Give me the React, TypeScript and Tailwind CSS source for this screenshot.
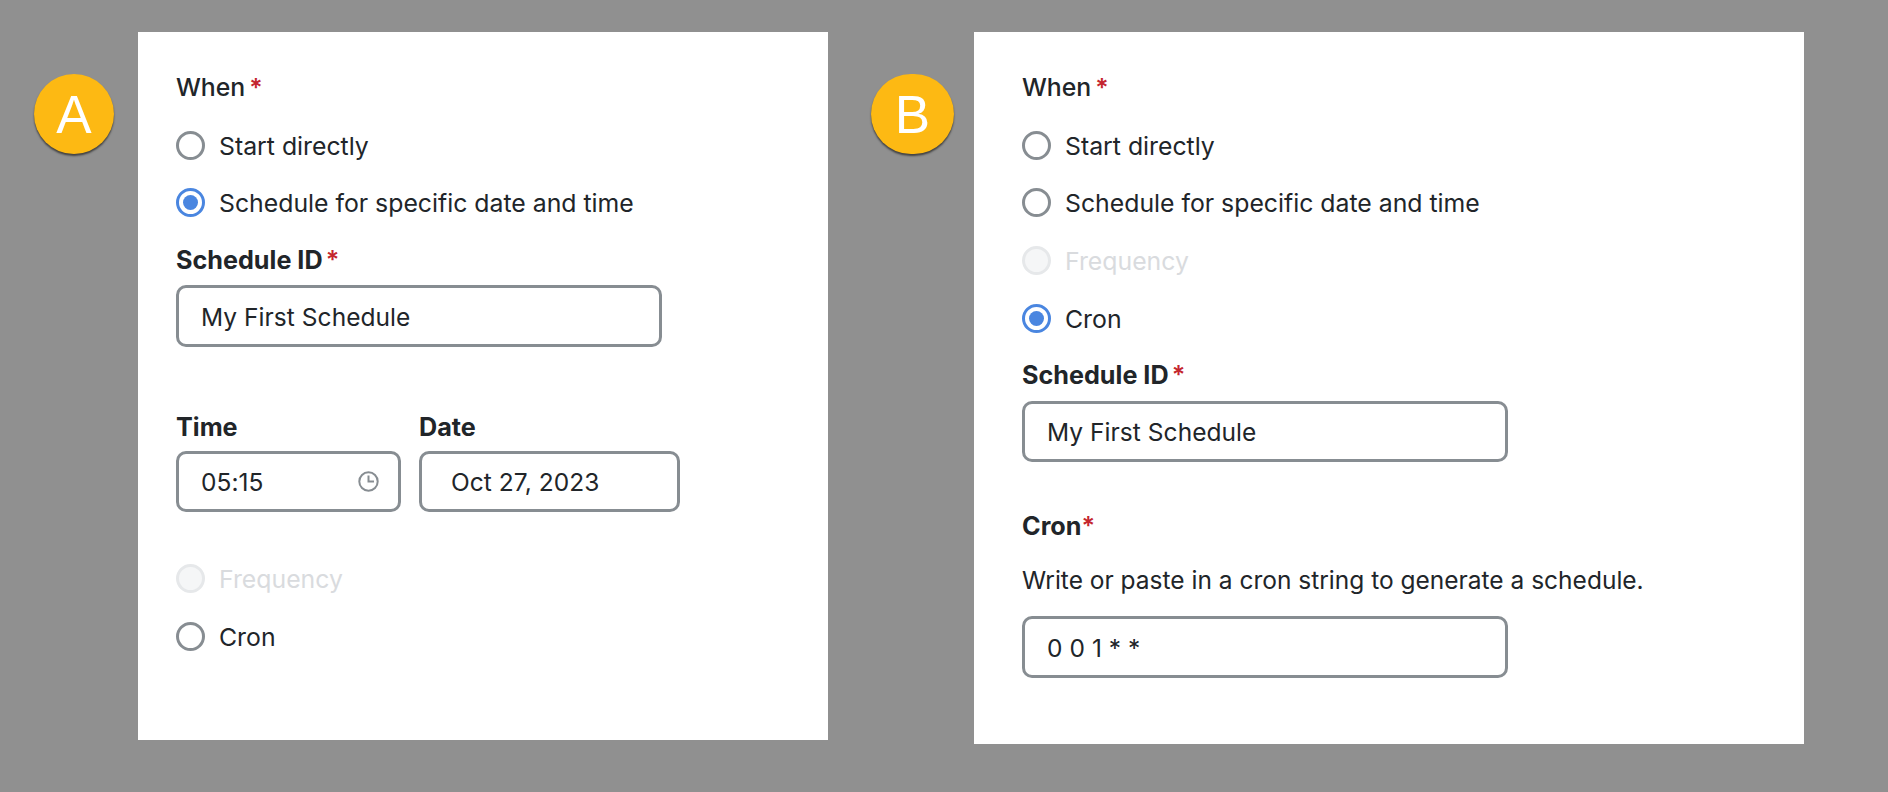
import React from "react";

function Radio({ label, state = "off", className = "" }: { label: string; state?: "off" | "on" | "disabled"; className?: string }) {
  const circle =
    state === "on"
      ? "border-[#4a86e0] bg-white"
      : state === "disabled"
      ? "border-[#e6e8ea] bg-[#f5f6f7]"
      : "border-[#878d92] bg-white";
  return (
    <div className={`flex items-center h-[29px] gap-[14px] ${className}`}>
      <span className={`flex items-center justify-center w-[29px] h-[29px] rounded-full border-[3px] shrink-0 ${circle}`}>
        {state === "on" && <span className="block w-[15px] h-[15px] rounded-full bg-[#4a86e0]" />}
      </span>
      <span className={`self-start text-[24.8px] leading-[31px] ${state === "disabled" ? "text-[#d9dbde]" : "text-[#212529]"}`}>{label}</span>
    </div>
  );
}

function Req({ className = "" }: { className?: string }) {
  return <span className={`text-[#c4262e] font-semibold ${className}`}>*</span>;
}

function Label({ text, className = "", star = "ml-[3px]" }: { text: string; className?: string; star?: string | null }) {
  return (
    <div className={`h-[34px] text-[25.2px] leading-[34px] font-bold text-[#212529] ${className}`}>
      {text}
      {star && <Req className={star} />}
    </div>
  );
}

function Field({ value, className = "", pad = "pl-[22px]", children }: { value: string; className?: string; pad?: string; children?: React.ReactNode }) {
  return (
    <div className={`flex items-center justify-between border-[3px] border-[#878d92] rounded-[10px] bg-white text-[24.5px] text-[#212529] tracking-[0.05px] ${pad} ${className}`}>
      <span className="pt-[2px]">{value}</span>
      {children}
    </div>
  );
}

function Badge({ letter, className = "" }: { letter: string; className?: string }) {
  return (
    <div
      className={`flex items-center justify-center h-[80px] mt-[74px] rounded-full bg-[#fdb913] text-white text-[53px] leading-none shadow-[0_2px_2px_rgba(0,0,0,0.55)] shrink-0 ${className}`}
      style={{ fontFamily: '"Liberation Sans", sans-serif' }}
    >
      {letter}
    </div>
  );
}

export default function App() {
  return (
    <div className="flex items-start h-[792px] w-[1888px] bg-[#909090] overflow-hidden pl-[34px]" style={{ fontFamily: 'Inter, sans-serif' }}>
      <Badge letter="A" className="w-[80px]" />
      <div className="flex flex-col w-[690px] h-[708px] mt-[32px] ml-[24px] bg-white pt-[38px] pl-[38px]">
        <div className="h-[34px] text-[24.8px] leading-[34px] font-medium text-[#212529]">
          When<Req className="ml-[4px]" />
        </div>
        <Radio label="Start directly" className="mt-[27px]" />
        <Radio label="Schedule for specific date and time" state="on" className="mt-[28px]" />
        <Label text="Schedule ID" className="mt-[26px]" />
        <Field value="My First Schedule" className="mt-[8px] w-[486px] h-[62px]" />
        <div className="flex mt-[63px] gap-[18px]">
          <div className="flex flex-col w-[225px]">
            <Label text="Time" star={null} />
            <Field value="05:15" className="mt-[7px] h-[61px] pr-[19px]">
              <svg width="21" height="21" viewBox="0 0 21 21" fill="none" stroke="#878d92" strokeWidth="2">
                <circle cx="10.5" cy="10.5" r="9.2" />
                <path d="M10.5 4.5v6h5.5" />
              </svg>
            </Field>
          </div>
          <div className="flex flex-col w-[261px]">
            <Label text="Date" star={null} />
            <Field value="Oct 27, 2023" pad="pl-[29px]" className="mt-[7px] h-[61px]" />
          </div>
        </div>
        <Radio label="Frequency" state="disabled" className="mt-[52px]" />
        <Radio label="Cron" className="mt-[29px]" />
      </div>

      <Badge letter="B" className="w-[83px] ml-[43px]" />
      <div className="flex flex-col w-[830px] h-[712px] mt-[32px] ml-[20px] bg-white pt-[38px] pl-[48px]">
        <div className="h-[34px] text-[24.8px] leading-[34px] font-medium text-[#212529]">
          When<Req className="ml-[4px]" />
        </div>
        <Radio label="Start directly" className="mt-[27px]" />
        <Radio label="Schedule for specific date and time" className="mt-[28px]" />
        <Radio label="Frequency" state="disabled" className="mt-[29px]" />
        <Radio label="Cron" state="on" className="mt-[29px]" />
        <Label text="Schedule ID" className="mt-[25px]" />
        <Field value="My First Schedule" className="mt-[9px] w-[486px] h-[61px]" />
        <Label text="Cron" star="ml-0" className="mt-[47px]" />
        <div className="mt-[20px] h-[34px] text-[24.5px] leading-[35px] text-[#212529]">Write or paste in a cron string to generate a schedule.</div>
        <Field value="0 0 1 * *" className="mt-[19px] w-[486px] h-[62px]" />
      </div>
    </div>
  );
}
